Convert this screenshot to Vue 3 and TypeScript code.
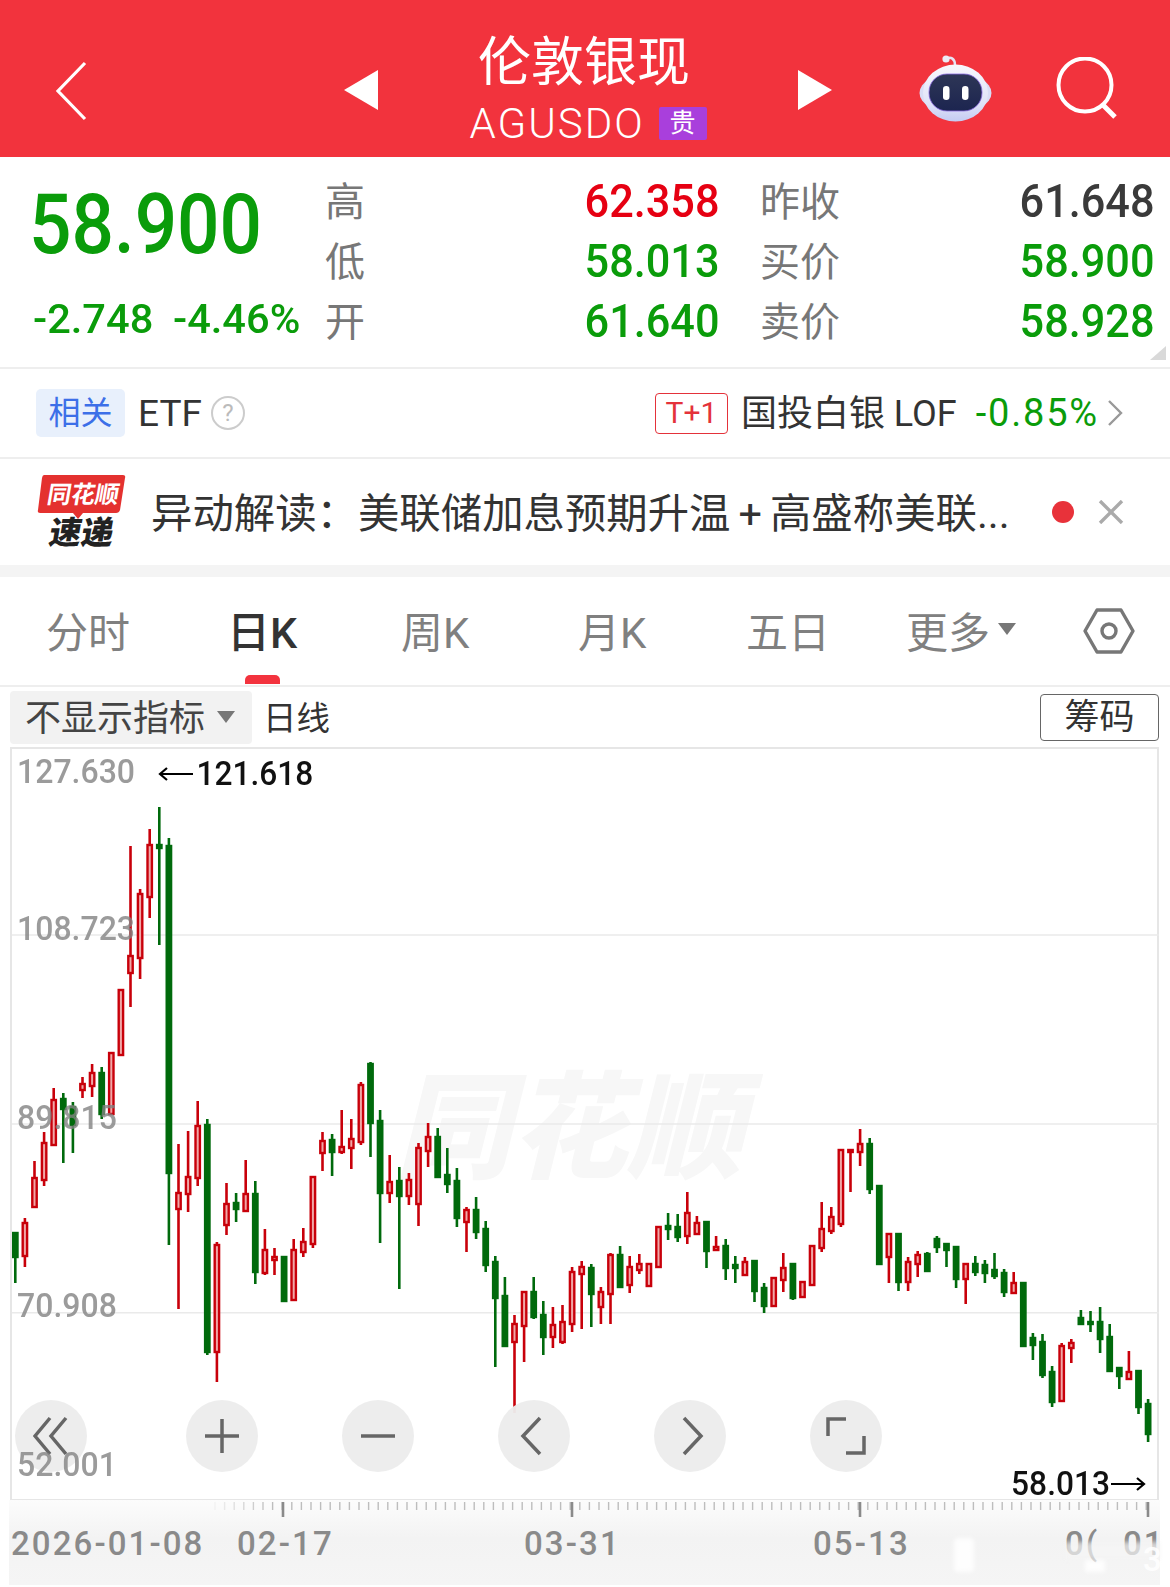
<template>
  <div class="page">
    <header class="nav">
      <svg class="back" width="32" height="60" viewBox="0 0 32 60">
        <path d="M30 2 L3 30 L30 58" fill="none" stroke="#fff" stroke-width="3.200" />
      </svg>
      <svg class="tri tri-left" width="34" height="40" viewBox="0 0 34 40"><polygon points="34,0 0,20 34,40" fill="#fff" /></svg>
      <div class="title">
        <div class="name">伦敦银现</div>
        <div class="code">AGUSDO<span class="badge">贵</span></div>
      </div>
      <svg class="tri" width="34" height="40" viewBox="0 0 34 40"><polygon points="0,0 34,20 0,40" fill="#fff" /></svg>
      <svg class="robot" width="74" height="68" viewBox="0 0 74 68">
        <defs>
          <linearGradient id="head" x1="0" y1="0" x2="0" y2="1">
            <stop offset="0" stop-color="#f8f8fd" />
            <stop offset="0.7" stop-color="#dfe2f8" />
            <stop offset="1" stop-color="#c4cbf2" />
          </linearGradient>
          <linearGradient id="face" x1="0" y1="0" x2="0" y2="1">
            <stop offset="0" stop-color="#2e3656" />
            <stop offset="1" stop-color="#1c2550" />
          </linearGradient>
        </defs>
        <path d="M27 5 C32 2 36 5 36 11" fill="none" stroke="#e6e4f4" stroke-width="2.500" />
        <circle cx="27" cy="5" r="3.600" fill="#ecebf6" />
        <ellipse cx="36.500" cy="39" rx="36" ry="20" fill="#d9ddf6" />
        <ellipse cx="36.500" cy="39" rx="32.500" ry="28.500" fill="url(#head)" />
        <rect x="10" y="20" width="53" height="37" rx="18" fill="url(#face)" stroke="#8a6ae0" stroke-width="0.800" />
        <rect x="24" y="32" width="6.500" height="14" rx="3.200" fill="#fff" />
        <rect x="43" y="32" width="6.500" height="14" rx="3.200" fill="#fff" />
      </svg>
      <svg class="search" width="64" height="64" viewBox="0 0 64 64">
        <circle cx="30" cy="28" r="26.500" fill="none" stroke="#fff" stroke-width="4" />
        <path d="M48 48 L60 60" stroke="#fff" stroke-width="5" />
      </svg>
    </header>

    <section class="quote">
      <div class="price">
        <div class="big"><span class="num">58.900</span></div>
        <div class="chg"><span class="num">-2.748</span><span class="num">-4.46%</span></div>
      </div>
      <div v-for="col in quoteCols" :key="col.cls" class="qcol" :class="col.cls">
        <div v-for="row in col.rows" :key="row.label" class="qrow">
          <span class="qlabel">{{ row.label }}</span>
          <span class="qval" :class="row.tone"><span class="num">{{ row.value }}</span></span>
        </div>
      </div>
      <svg class="corner" width="16" height="14" viewBox="0 0 16 14"><polygon points="16,0 16,14 0,14" fill="#d9d9d9" /></svg>
    </section>

    <section class="etf">
      <span class="tag">相关</span>
      <span class="etf-name">ETF</span>
      <span class="help">?</span>
      <span class="spacer"></span>
      <span class="tplus">T+1</span>
      <span class="fund">国投白银 LOF</span>
      <span class="fund-chg">-0.85%</span>
      <svg width="18" height="28" viewBox="0 0 18 28"><path d="M3 2 L15 14 L3 26" fill="none" stroke="#999" stroke-width="2.400" /></svg>
    </section>

    <section class="news">
      <svg class="logo" width="90" height="82" viewBox="0 0 90 82">
        <path d="M7 1 H86 Q89 1 88 4 L83 36 Q82 39 79 39 H46 L41 45 L36 39 H3 Q0 39 1 36 L5 4 Q5.500 1 7 1 Z" fill="#e4312f" />
        <text x="45" y="29" class="logo-top" transform="skewX(-10) translate(5 0)">同花顺</text>
        <text x="45" y="70" class="logo-bottom" transform="skewX(-10) translate(10 0)">速递</text>
      </svg>
      <div class="news-text">异动解读：美联储加息预期升温<span class="plus">+</span>高盛称美联...</div>
      <span class="dot"></span>
      <svg width="26" height="24" viewBox="0 0 26 24"><path d="M2 1 L24 23 M24 1 L2 23" stroke="#aaa" stroke-width="3.400" /></svg>
    </section>

    <nav class="tabs">
      <span v-for="tab in tabs" :key="tab.text" class="tab" :class="{ active: tab.active }" :style="{ width: tab.w + 'px' }">{{ tab.text }}</span>
      <span class="tab more">更多<i class="caret"></i></span>
      <svg class="hex" width="52" height="46" viewBox="0 0 52 46">
        <path d="M14 2 H38 L50 23 L38 44 H14 L2 23 Z" fill="none" stroke="#777" stroke-width="3.400" stroke-linejoin="round" />
        <circle cx="26" cy="23" r="7" fill="none" stroke="#777" stroke-width="3.400" />
      </svg>
    </nav>

    <div class="indicator">
      <span class="select">不显示指标<i class="caret"></i></span>
      <span class="period">日线</span>
      <span class="spacer"></span>
      <span class="chips">筹码</span>
    </div>

    <div class="chart">
      <div class="mark">同花顺</div>
      <svg class="candles" width="1147" height="750" viewBox="12 749 1147 750">
        <line v-for="y in grid" :key="y" x1="12" x2="1159" :y1="y" :y2="y" stroke="#eaeaea" stroke-width="1.500" />
        <g v-for="c in candles" :key="c.x">
          <line :x1="c.x" :x2="c.x" :y1="c.hi" :y2="c.top" :stroke="c.color" stroke-width="2.600" />
          <line :x1="c.x" :x2="c.x" :y1="c.bot" :y2="c.lo" :stroke="c.color" stroke-width="2.600" />
          <rect :x="c.x - 2.2" :y="c.top" width="4.400" :height="c.bot - c.top" :fill="c.fill" :stroke="c.color" stroke-width="2.400" />
        </g>
      </svg>
      <div class="tools">
        <button class="tool"><svg width="36" height="40" viewBox="0 0 36 40"><path d="M17 2 L2 20 L17 38 M33 2 L18 20 L33 38" fill="none" /></svg></button>
        <button class="tool"><svg width="36" height="40" viewBox="0 0 36 40"><path d="M1 20 H35 M18 3 V37" fill="none" /></svg></button>
        <button class="tool"><svg width="36" height="40" viewBox="0 0 36 40"><path d="M1 20 H35" fill="none" /></svg></button>
        <button class="tool"><svg width="36" height="40" viewBox="0 0 36 40"><path d="M24 2 L7 20 L24 38" fill="none" /></svg></button>
        <button class="tool"><svg width="36" height="40" viewBox="0 0 36 40"><path d="M12 2 L29 20 L12 38" fill="none" /></svg></button>
        <button class="tool"><svg width="40" height="40" viewBox="0 0 40 40"><path d="M2 20 V3 H20 M38 20 V37 H20" fill="none" /></svg></button>
      </div>
      <span v-for="l in axisLabels" :key="l.text" class="ylabel" :style="{ left: l.x + 'px', top: l.y + 'px' }">{{ l.text }}</span>
      <div class="extreme high">
        <svg width="36" height="16" viewBox="0 0 36 16"><path d="M35 8 H2 M9 2 L2 8 L9 14" fill="none" stroke="#000" stroke-width="2.200" /></svg>
        <span>121.618</span>
      </div>
      <div class="extreme low">
        <span>58.013</span>
        <svg width="36" height="16" viewBox="0 0 36 16"><path d="M1 8 H34 M27 2 L34 8 L27 14" fill="none" stroke="#000" stroke-width="2.200" /></svg>
      </div>
    </div>

    <footer class="axis">
      <svg class="ticks" width="1151" height="20" viewBox="9 1500 1151 20">
        <line v-for="t in ticks" :key="t.x" :x1="t.x" :x2="t.x" y1="1502" :y2="t.major ? 1517 : 1510" :stroke="t.major ? '#8a8a8a' : '#bdbdbd'" :stroke-width="t.major ? 2.600 : 1.400" :opacity="t.opacity" />
      </svg>
      <div class="dates">
        <span class="d0">2026-01-08</span>
        <span class="d1">02-17</span>
        <span class="d2">03-31</span>
        <span class="d3">05-13</span>
        <span class="d4">0(</span>
        <span class="d5">01</span>
        <i class="smudge s1"></i>
        <i class="smudge s2"></i>
        <i class="smudge s3"></i>
        <span class="d6">3</span>
      </div>
    </footer>
  </div>
</template>

<script setup lang="ts">
type Raw = [string, number, number, number, number]

const quoteCols = [
  {
    cls: 'q1',
    rows: [
      { label: '高', value: '62.358', tone: 'up' },
      { label: '低', value: '58.013', tone: 'down' },
      { label: '开', value: '61.640', tone: 'down' }
    ]
  },
  {
    cls: 'q2',
    rows: [
      { label: '昨收', value: '61.648', tone: 'flat' },
      { label: '买价', value: '58.900', tone: 'down' },
      { label: '卖价', value: '58.928', tone: 'down' }
    ]
  }
]

const tabs = [
  { text: '分时', w: 181 },
  { text: '日K', w: 174, active: true },
  { text: '周K', w: 177 },
  { text: '月K', w: 168 },
  { text: '五日', w: 160 }
]

const grid = [935, 1124, 1312.7]

// colour, high, body top, body bottom, low - one candle every 9.6px
const raw: Raw[] = [
  ['g', 1232, 1233, 1257, 1283], ['r', 1218, 1223, 1256, 1267], ['r', 1161, 1178, 1207, 1207], ['r', 1132, 1143, 1180, 1186],
  ['r', 1088, 1100, 1145, 1145], ['g', 1093, 1099, 1109, 1163], ['g', 1102, 1107, 1125, 1153], ['r', 1077, 1084, 1090, 1098],
  ['r', 1064, 1073, 1086, 1097], ['g', 1067, 1073, 1114, 1119], ['r', 1052, 1053, 1114, 1114], ['r', 990, 990, 1055, 1055],
  ['r', 846, 956, 973, 1007], ['r', 889, 894, 958, 979], ['r', 829, 845, 897, 918], ['g', 807, 845, 848, 945],
  ['g', 838, 846, 1173, 1245], ['r', 1144, 1193, 1209, 1309], ['r', 1131, 1177, 1194, 1212], ['r', 1101, 1126, 1178, 1186],
  ['g', 1119, 1125, 1352, 1355], ['r', 1242, 1245, 1352, 1382], ['r', 1183, 1204, 1225, 1235], ['g', 1193, 1203, 1209, 1222],
  ['r', 1160, 1194, 1211, 1211], ['g', 1181, 1194, 1272, 1284], ['r', 1229, 1250, 1273, 1275], ['r', 1248, 1257, 1260, 1275],
  ['g', 1257, 1257, 1301, 1301], ['r', 1239, 1250, 1300, 1300], ['r', 1228, 1242, 1252, 1257], ['r', 1176, 1177, 1244, 1248],
  ['r', 1132, 1141, 1153, 1171], ['g', 1134, 1140, 1152, 1176], ['r', 1110, 1147, 1152, 1154], ['r', 1119, 1139, 1148, 1169],
  ['r', 1082, 1085, 1142, 1145], ['g', 1062, 1064, 1123, 1157], ['g', 1110, 1121, 1193, 1243], ['r', 1155, 1182, 1193, 1203],
  ['g', 1167, 1181, 1196, 1289], ['r', 1173, 1180, 1196, 1205], ['r', 1143, 1148, 1204, 1226], ['r', 1123, 1137, 1151, 1167],
  ['g', 1128, 1137, 1177, 1177], ['g', 1148, 1175, 1184, 1193], ['g', 1168, 1181, 1218, 1227], ['r', 1207, 1210, 1222, 1252],
  ['g', 1197, 1210, 1232, 1239], ['g', 1221, 1229, 1265, 1272], ['g', 1256, 1262, 1298, 1367], ['g', 1277, 1296, 1346, 1346],
  ['r', 1315, 1324, 1342, 1413], ['r', 1292, 1292, 1326, 1362], ['g', 1277, 1292, 1317, 1319], ['g', 1301, 1315, 1337, 1355],
  ['r', 1307, 1325, 1337, 1348], ['r', 1305, 1322, 1342, 1344], ['r', 1267, 1272, 1324, 1332], ['r', 1261, 1267, 1274, 1329],
  ['g', 1264, 1268, 1294, 1327], ['r', 1287, 1292, 1307, 1324], ['r', 1253, 1255, 1294, 1324], ['g', 1246, 1255, 1287, 1287],
  ['r', 1256, 1267, 1285, 1293], ['r', 1254, 1264, 1270, 1274], ['r', 1264, 1264, 1286, 1286], ['r', 1226, 1227, 1267, 1267],
  ['g', 1213, 1226, 1229, 1240], ['g', 1214, 1227, 1237, 1242], ['r', 1192, 1213, 1236, 1244], ['r', 1216, 1223, 1234, 1234],
  ['g', 1222, 1222, 1251, 1268], ['r', 1236, 1247, 1250, 1250], ['g', 1239, 1246, 1268, 1280], ['g', 1256, 1265, 1268, 1283],
  ['r', 1257, 1262, 1275, 1275], ['g', 1261, 1261, 1291, 1302], ['g', 1283, 1288, 1306, 1313], ['r', 1278, 1278, 1306, 1306],
  ['r', 1253, 1268, 1280, 1292], ['g', 1264, 1264, 1298, 1300], ['r', 1281, 1282, 1297, 1297], ['r', 1245, 1246, 1285, 1285],
  ['r', 1202, 1229, 1248, 1252], ['r', 1207, 1217, 1231, 1234], ['r', 1150, 1150, 1224, 1227], ['r', 1149, 1150, 1152, 1192],
  ['r', 1129, 1144, 1152, 1166], ['g', 1138, 1144, 1189, 1194], ['g', 1186, 1186, 1264, 1264], ['r', 1234, 1234, 1257, 1283],
  ['g', 1234, 1234, 1282, 1291], ['r', 1257, 1262, 1282, 1291], ['r', 1251, 1255, 1264, 1277], ['g', 1252, 1254, 1271, 1272],
  ['g', 1236, 1239, 1247, 1253], ['g', 1244, 1244, 1250, 1267], ['g', 1247, 1247, 1279, 1288], ['r', 1263, 1264, 1279, 1304],
  ['g', 1256, 1264, 1272, 1276], ['g', 1260, 1265, 1273, 1283], ['g', 1253, 1270, 1276, 1279], ['g', 1269, 1273, 1292, 1297],
  ['r', 1272, 1283, 1293, 1294], ['g', 1283, 1283, 1346, 1346], ['g', 1333, 1338, 1345, 1360], ['g', 1334, 1342, 1375, 1378],
  ['g', 1366, 1372, 1402, 1407], ['r', 1343, 1346, 1401, 1401], ['r', 1339, 1343, 1348, 1363], ['g', 1310, 1318, 1324, 1324],
  ['g', 1311, 1322, 1324, 1332], ['g', 1307, 1322, 1339, 1353], ['g', 1324, 1337, 1371, 1371], ['g', 1368, 1368, 1376, 1389],
  ['r', 1351, 1372, 1379, 1379], ['g', 1371, 1371, 1407, 1414], ['g', 1399, 1404, 1434, 1442]
]

const candles = raw.map(([c, hi, top, bot, lo], i) => ({
  x: 15.3 + i * 9.6,
  hi,
  top,
  bot,
  lo,
  color: c === 'r' ? '#c8000a' : '#006a0c',
  fill: c === 'r' ? '#f0a8a8' : '#006a0c'
}))

const axisLabels = [
  { text: '127.630', x: 5, y: 3 },
  { text: '108.723', x: 5, y: 160 },
  { text: '89.815', x: 5, y: 349 },
  { text: '70.908', x: 5, y: 537 },
  { text: '52.001', x: 5, y: 696 }
]

const ticks: { x: number; major: boolean; opacity: number }[] = []
for (let i = 0; i < 98; i++) {
  const x = 215 + i * 9.6
  ticks.push({ x, major: false, opacity: Math.min(1, (i + 1) / 7) })
}
for (const x of [283, 572, 860, 1148]) ticks.push({ x, major: true, opacity: 1 })
</script>

<style>
html,
body {
  margin: 0;
  background: #fff;
}
</style>

<style scoped>
.page {
  width: 1170px;
  height: 1587px;
  overflow: hidden;
  font-family: Roboto, "Noto Sans CJK SC", sans-serif;
  color: #333;
}

.nav {
  height: 157px;
  box-sizing: border-box;
  padding-top: 22px;
  background: #f2333d;
  display: flex;
  align-items: center;
  color: #fff;
}

.back {
  margin: 2px 0 0 55px;
}

.tri-left {
  margin-left: 257px;
}

.title {
  width: 420px;
  text-align: center;
}

.name {
  font-size: 53px;
  line-height: 64px;
  margin: -2px 8px 0 0;
}

.code {
  font-size: 42px;
  letter-spacing: 2px;
  line-height: 46px;
  margin-top: 6px;
  display: flex;
  justify-content: center;
  align-items: center;
  font-weight: 300;
}

.badge {
  width: 48px;
  height: 33px;
  margin-left: 14px;
  background: #a93fdc;
  color: #fff;
  font-size: 26px;
  letter-spacing: 0;
  line-height: 33px;
  font-weight: 400;
  border-radius: 2px;
}

.robot {
  margin: -4px 0 0 87px;
}

.search {
  margin: -2px 0 0 62px;
}

.quote {
  position: relative;
  height: 210px;
  border-bottom: 2px solid #eee;
  display: flex;
}

.num {
  display: inline-block;
  font-weight: 500;
  transform: scaleX(0.94);
  transform-origin: right center;
}

.price {
  width: 293px;
  margin-left: 33px;
  color: #0a9c0a;
}

.big {
  font-size: 83px;
  line-height: 96px;
  margin: 20px 0 0 -4px;
}

.big .num {
  transform-origin: left center;
  transform: scaleX(0.9);
}

.chg {
  font-size: 40px;
  line-height: 44px;
  margin-top: 25px;
  display: flex;
  gap: 23px;
}

.chg .num {
  transform-origin: left center;
  transform: scaleX(1.04);
  width: 117px;
}

.qcol {
  margin-top: 15px;
}

.q1 {
  width: 395px;
  margin-left: -1px;
}

.q2 {
  width: 395px;
  margin-left: 40px;
}

.qrow {
  height: 60px;
  display: flex;
  justify-content: space-between;
  align-items: center;
}

.qlabel {
  font-size: 40px;
  color: #777;
  margin-top: -6px;
}

.qval {
  font-size: 46px;
  margin-top: -3px;
}

.up {
  color: #e60012;
}

.down {
  color: #0a9c0a;
}

.flat {
  color: #3a3a3a;
}

.corner {
  position: absolute;
  right: 4px;
  bottom: 7px;
}

.etf {
  height: 88px;
  border-bottom: 2px solid #eee;
  display: flex;
  align-items: center;
  padding: 0 46px 0 36px;
}

.tag {
  width: 89px;
  height: 48px;
  background: #e8f0fc;
  border-radius: 5px;
  color: #3c6fe8;
  font-size: 32px;
  line-height: 48px;
  text-align: center;
}

.etf-name {
  font-size: 37px;
  margin-left: 13px;
}

.help {
  width: 30px;
  height: 30px;
  margin-left: 9px;
  border: 2.500px solid #ccc;
  border-radius: 50%;
  color: #bbb;
  font-size: 24px;
  line-height: 30px;
  text-align: center;
}

.spacer {
  flex: 1;
}

.tplus {
  width: 73px;
  height: 41px;
  border: 1.500px solid #e4323a;
  border-radius: 4px;
  box-sizing: border-box;
  color: #e4323a;
  font-size: 30px;
  line-height: 38px;
  text-align: center;
}

.fund {
  font-size: 36px;
  margin: -6px 0 0 13px;
}

.fund-chg {
  font-size: 38px;
  letter-spacing: 1.800px;
  color: #0a9c0a;
  margin: 0 7px 0 19px;
}

.news {
  height: 106px;
  display: flex;
  align-items: center;
  padding-left: 37px;
}

.logo {
  margin-top: 6px;
}

.logo-top {
  fill: #fff;
  font-size: 24px;
  font-weight: 700;
  text-anchor: middle;
}

.logo-bottom {
  fill: #222;
  font-size: 32px;
  font-weight: 900;
  text-anchor: middle;
}

.news-text {
  width: 901px;
  margin: -4px 0 0 24px;
  font-size: 41.400px;
  white-space: nowrap;
  color: #333;
}

.plus {
  margin: 0 8px;
}

.dot {
  width: 22px;
  height: 22px;
  margin-right: 24px;
  border-radius: 50%;
  background: #e8323a;
}

.tabs {
  height: 108px;
  border-top: 12px solid #f4f4f4;
  border-bottom: 2px solid #eee;
  display: flex;
  align-items: center;
  padding-left: 46px;
}

.tab {
  font-size: 42px;
  color: #808080;
  margin-top: -4px;
}

.tab.active {
  color: #333;
  font-size: 43px;
  font-weight: 500;
  position: relative;
}

.tab.active::after {
  content: "";
  position: absolute;
  left: 18px;
  bottom: -24px;
  width: 35px;
  height: 9px;
  background: #f3333e;
  border-radius: 5px 5px 0 0;
}

.more {
  display: flex;
  align-items: center;
  width: 177px;
}

.caret {
  display: inline-block;
  width: 0;
  height: 0;
  margin-left: 8px;
  border-left: 9px solid transparent;
  border-right: 9px solid transparent;
  border-top: 12px solid #777;
}

.indicator {
  height: 60px;
  display: flex;
  align-items: center;
  padding: 0 11px 0 10px;
}

.select {
  width: 242px;
  height: 53px;
  box-sizing: border-box;
  padding: 0 0 4px 15px;
  background: #f2f2f2;
  border-radius: 4px;
  display: flex;
  align-items: center;
  font-size: 36px;
  color: #444;
  white-space: nowrap;
}

.select .caret {
  margin: 4px 0 0 12px;
}

.period {
  margin: -4px 0 0 11px;
  font-size: 33.500px;
}

.chips {
  width: 119px;
  height: 47px;
  box-sizing: border-box;
  border: 1.500px solid #666;
  border-radius: 4px;
  font-size: 35px;
  line-height: 45px;
  text-align: center;
}

.chart {
  position: relative;
  height: 750px;
  margin: 0 11px 0 10px;
  border: 2px solid #e6e6e6;
  border-bottom-width: 1px;
}

.candles {
  position: absolute;
  left: 0;
  top: 0;
}

.mark {
  position: absolute;
  left: 383px;
  top: 315px;
  font-size: 116px;
  line-height: 130px;
  font-weight: 900;
  font-style: italic;
  color: #f7f7f7;
  white-space: nowrap;
}

.ylabel {
  position: absolute;
  font-size: 33px;
  line-height: 40px;
  color: rgba(130, 130, 130, 0.8);
  transform: scaleX(0.97);
  transform-origin: left center;
  font-weight: 500;
}

.extreme {
  position: absolute;
  display: flex;
  align-items: center;
  color: #111;
  font-size: 33px;
  line-height: 40px;
  font-weight: 500;
}

.extreme span {
  transform: scaleX(0.96);
}

.high {
  left: 146px;
  top: 5px;
  gap: 0;
}

.low {
  right: 11px;
  top: 715px;
}

.low span {
  transform-origin: right center;
}

.tools {
  position: absolute;
  left: 3px;
  top: 651px;
  display: flex;
}

.tool {
  width: 72px;
  height: 72px;
  margin-right: 84px;
  padding: 0;
  border: none;
  border-radius: 50%;
  background: rgba(236, 236, 236, 0.96);
  display: flex;
  align-items: center;
  justify-content: center;
}

.tool:first-child {
  margin-right: 99px;
}

.tool path {
  stroke: #666;
  stroke-width: 3.500;
}

.axis {
  margin-left: 9px;
  width: 1151px;
  height: 85px;
  background: linear-gradient(to bottom, #fcfcfc, #f3f3f3 45%, #f5f5f5);
  position: relative;
}

.ticks {
  display: block;
}

.dates span {
  position: absolute;
  top: 24px;
  font-size: 33px;
  line-height: 40px;
  font-weight: 500;
  color: #8a8a8a;
  letter-spacing: 2.100px;
}

.d0 {
  left: 2px;
}

.d1 {
  left: 228px;
}

.d2 {
  left: 515px;
}

.d3 {
  left: 804px;
}

.d4 {
  left: 1056px;
}

.d5 {
  left: 1114px;
}

.dates .d6 {
  left: 1134px;
  top: 40px;
  color: rgba(255, 255, 255, 0.9);
  letter-spacing: 0;
}

.smudge {
  position: absolute;
  background: rgba(255, 255, 255, 0.85);
  filter: blur(2px);
}

.s1 {
  left: 945px;
  top: 38px;
  width: 20px;
  height: 34px;
  border-radius: 4px;
}

.s2 {
  left: 1056px;
  top: 42px;
  width: 95px;
  height: 18px;
  background: rgba(245, 245, 245, 0.7);
}

.s3 {
  left: 1076px;
  top: 60px;
  width: 20px;
  height: 12px;
}
</style>
